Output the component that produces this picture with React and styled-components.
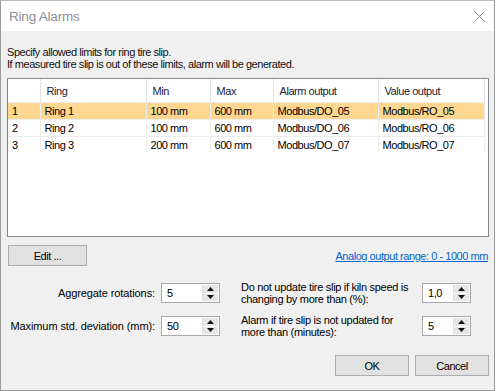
import styled, { createGlobalStyle } from "styled-components";

const GlobalStyle = createGlobalStyle`
  html, body {
    margin: 0;
    padding: 0;
    background: #ffffff;
  }
  body {
    font-family: "Liberation Sans", Arial, sans-serif;
    font-size: 11px;
    letter-spacing: -0.45px;
    color: #000;
  }
`;

const Window = styled.div`
  width: 495px;
  height: 391px;
  box-sizing: border-box;
  border: 1px solid #9a9a9a;
  border-top-color: #b8b8b8;
  background: #f0f0f0;
  display: flex;
  flex-direction: column;
`;

const TitleBar = styled.div`
  height: 30px;
  background: #ffffff;
  display: flex;
  align-items: center;
  justify-content: space-between;
  padding: 0 9px 0 8px;
`;

const Title = styled.div`
  font-family: "Liberation Sans", sans-serif;
  font-size: 13.5px;
  letter-spacing: -0.2px;
  color: #8f8f98;
`;

const Body = styled.div`
  padding: 0 5px 0 6px;
  display: flex;
  flex-direction: column;
`;

const Intro = styled.div`
  margin-top: 15px;
  line-height: 12px;
  color: #111;
`;

const TableFrame = styled.div`
  margin-top: 8px;
  height: 159px;
  box-sizing: border-box;
  border: 1px solid #828790;
  background: #fff;
  overflow: hidden;
`;

const Grid = styled.table`
  border-collapse: collapse;
  table-layout: fixed;
  width: 476px;
`;

const Head = styled.th`
  height: 23px;
  padding: 0 0 0 6px;
  text-align: left;
  font-weight: normal;
  color: #1b1b3a;
  border-right: 1px solid #e3e3e3;
`;

const Row = styled.tr`
  background: ${(p) => (p.$selected ? "#fdd690" : "#ffffff")};
`;

const Cell = styled.td`
  height: 16px;
  padding: 0 0 0 4px;
  border-right: 1px solid #ececec;
  border-top: 1px solid #ececec;
  white-space: nowrap;
`;

const ActionRow = styled.div`
  margin-top: 8px;
  display: flex;
  justify-content: space-between;
  align-items: center;
`;

const Button = styled.button`
  width: ${(p) => p.$w}px;
  height: 21px;
  box-sizing: border-box;
  border: 1px solid #adadad;
  background: #e1e1e1;
  font-family: inherit;
  font-size: 11px;
  letter-spacing: inherit;
  color: #000;
  padding: 0;
  margin-left: ${(p) => p.$ml || 0}px;
`;

const Link = styled.a`
  color: #0066cc;
  text-decoration: underline;
  margin-right: 1px;
`;

const Settings = styled.div`
  margin-top: 15px;
  display: grid;
  grid-template-columns: 213px 1fr;
  column-gap: 21px;
  row-gap: 9px;
`;

const Field = styled.div`
  display: flex;
  align-items: center;
  justify-content: ${(p) => (p.$left ? "flex-start" : "flex-end")};
  gap: 6px;
`;

const Label = styled.div`
  line-height: 12px;
  text-align: ${(p) => (p.$left ? "left" : "right")};
  width: ${(p) => (p.$w ? p.$w + "px" : "auto")};
  letter-spacing: ${(p) => (p.$left ? "-0.3px" : "-0.1px")};
  white-space: nowrap;
`;

const Spinner = styled.div`
  width: ${(p) => p.$w}px;
  height: 20px;
  box-sizing: border-box;
  border: 1px solid #a8a8a8;
  background: #fff;
  display: flex;
  flex-shrink: 0;
`;

const SpinValue = styled.div`
  flex: 1;
  padding-left: 5px;
  line-height: 18px;
`;

const SpinButtons = styled.div`
  width: 15px;
  display: flex;
  flex-direction: column;
  border-left: 1px solid #e0e0e0;
  margin: 1px 1px 1px 0;
  gap: 1px;
  background: #fff;
`;

const SpinArrow = styled.div`
  flex: 1;
  background: #e6e6e6;
  display: flex;
  align-items: center;
  justify-content: center;
`;

const Footer = styled.div`
  margin-top: 17px;
  display: flex;
  justify-content: flex-end;
`;

const Arrow = ({ up }) => (
  <svg width="7" height="4" viewBox="0 0 7 4">
    <polygon points={up ? "3.5,0 7,4 0,4" : "0,0 7,0 3.5,4"} fill="#111" />
  </svg>
);

const Spin = ({ value, w }) => (
  <Spinner $w={w}>
    <SpinValue>{value}</SpinValue>
    <SpinButtons>
      <SpinArrow>
        <Arrow up />
      </SpinArrow>
      <SpinArrow>
        <Arrow />
      </SpinArrow>
    </SpinButtons>
  </Spinner>
);

const rows = [
  ["1", "Ring 1", "100 mm", "600 mm", "Modbus/DO_05", "Modbus/RO_05"],
  ["2", "Ring 2", "100 mm", "600 mm", "Modbus/DO_06", "Modbus/RO_06"],
  ["3", "Ring 3", "200 mm", "600 mm", "Modbus/DO_07", "Modbus/RO_07"],
];

const widths = [32, 106, 64, 63, 105, 106];
const heads = ["", "Ring", "Min", "Max", "Alarm output", "Value output"];

export default function App() {
  return (
    <>
      <GlobalStyle />
      <Window>
        <TitleBar>
          <Title>Ring Alarms</Title>
          <svg width="11" height="11" viewBox="0 0 11 11">
            <path d="M0.5 0.5 L10.5 10.5 M10.5 0.5 L0.5 10.5" stroke="#8a8a8a" strokeWidth="1" />
          </svg>
        </TitleBar>
        <Body>
          <Intro>
            Specify allowed limits for ring tire slip.
            <br />
            If measured tire slip is out of these limits, alarm will be generated.
          </Intro>
          <TableFrame>
            <Grid>
              <colgroup>
                {widths.map((w, i) => (
                  <col key={i} style={{ width: w }} />
                ))}
              </colgroup>
              <thead>
                <tr>
                  {heads.map((h, i) => (
                    <Head key={i}>{h}</Head>
                  ))}
                </tr>
              </thead>
              <tbody>
                {rows.map((r, i) => (
                  <Row key={i} $selected={i === 0}>
                    {r.map((c, j) => (
                      <Cell key={j}>{c}</Cell>
                    ))}
                  </Row>
                ))}
              </tbody>
            </Grid>
          </TableFrame>
          <ActionRow>
            <Button $w={79} $ml={1}>Edit ...</Button>
            <Link>Analog output range: 0 - 1000 mm</Link>
          </ActionRow>
          <Settings>
            <Field>
              <Label>Aggregate rotations:</Label>
              <Spin value="5" w={59} />
            </Field>
            <Field $left>
              <Label $left $w={175}>
                Do not update tire slip if kiln speed is
                <br />
                changing by more than (%):
              </Label>
              <Spin value="1,0" w={49} />
            </Field>
            <Field>
              <Label>Maximum std. deviation (mm):</Label>
              <Spin value="50" w={59} />
            </Field>
            <Field $left>
              <Label $left $w={175}>
                Alarm if tire slip is not updated for
                <br />
                more than (minutes):
              </Label>
              <Spin value="5" w={49} />
            </Field>
          </Settings>
          <Footer>
            <Button $w={74}>OK</Button>
            <Button $w={74} $ml={6}>Cancel</Button>
          </Footer>
        </Body>
      </Window>
    </>
  );
}
